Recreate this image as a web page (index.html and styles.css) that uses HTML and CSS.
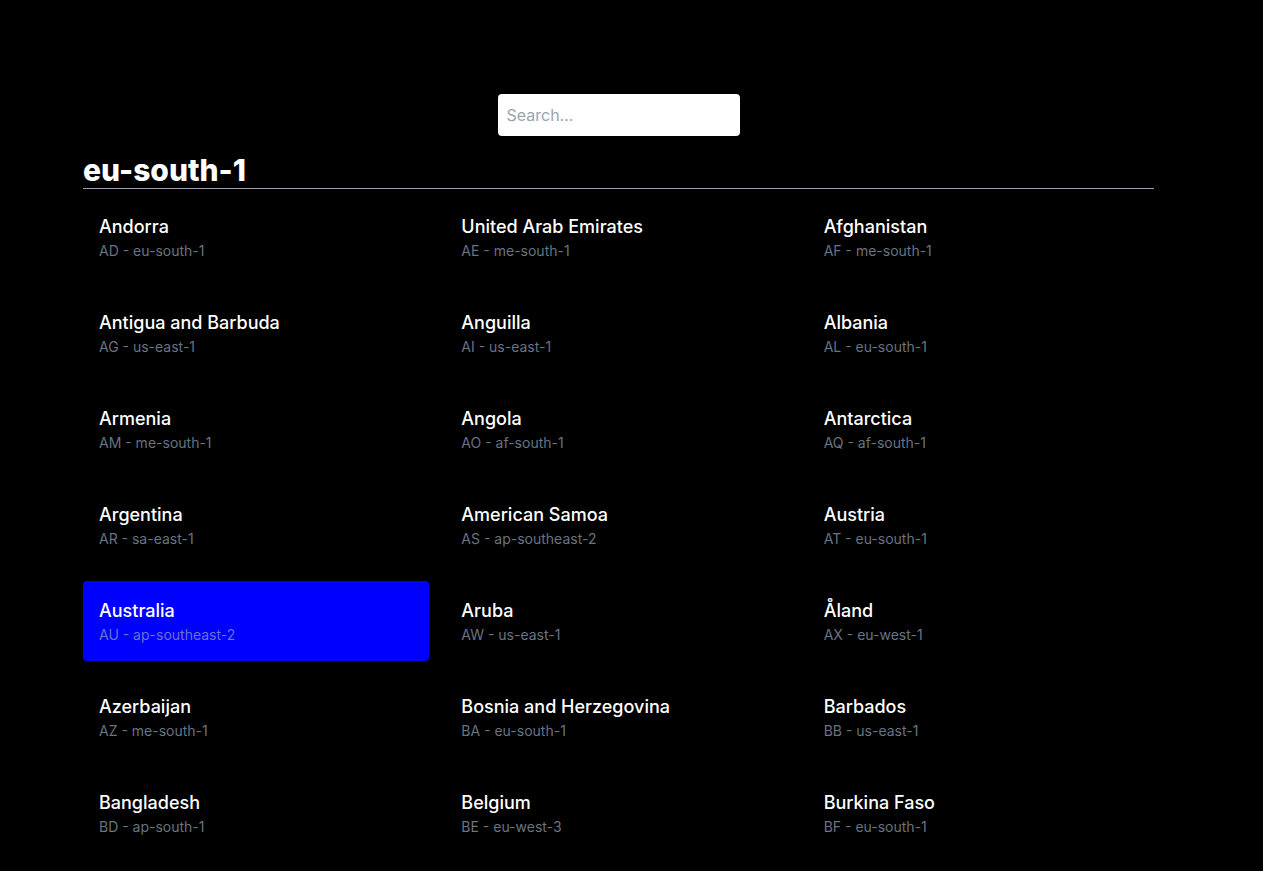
FILE: index.html
```html
<!DOCTYPE html>
<html lang="en">
<head>
<meta charset="utf-8">
<title>Countries</title>
<link rel="stylesheet" href="styles.css">
</head>
<body>
<main class="page">
  <div class="search-row">
    <input class="search" type="text" placeholder="Search...">
  </div>
  <section class="region">
    <h2 class="region-title">eu-south-1</h2>
    <div class="grid">
      <div class="card"><div class="name">Andorra</div><div class="meta">AD - eu-south-1</div></div>
      <div class="card"><div class="name">United Arab Emirates</div><div class="meta">AE - me-south-1</div></div>
      <div class="card"><div class="name">Afghanistan</div><div class="meta">AF - me-south-1</div></div>
      <div class="card"><div class="name">Antigua and Barbuda</div><div class="meta">AG - us-east-1</div></div>
      <div class="card"><div class="name">Anguilla</div><div class="meta">AI - us-east-1</div></div>
      <div class="card"><div class="name">Albania</div><div class="meta">AL - eu-south-1</div></div>
      <div class="card"><div class="name">Armenia</div><div class="meta">AM - me-south-1</div></div>
      <div class="card"><div class="name">Angola</div><div class="meta">AO - af-south-1</div></div>
      <div class="card"><div class="name">Antarctica</div><div class="meta">AQ - af-south-1</div></div>
      <div class="card"><div class="name">Argentina</div><div class="meta">AR - sa-east-1</div></div>
      <div class="card"><div class="name">American Samoa</div><div class="meta">AS - ap-southeast-2</div></div>
      <div class="card"><div class="name">Austria</div><div class="meta">AT - eu-south-1</div></div>
      <div class="card active"><div class="name">Australia</div><div class="meta">AU - ap-southeast-2</div></div>
      <div class="card"><div class="name">Aruba</div><div class="meta">AW - us-east-1</div></div>
      <div class="card"><div class="name">Åland</div><div class="meta">AX - eu-west-1</div></div>
      <div class="card"><div class="name">Azerbaijan</div><div class="meta">AZ - me-south-1</div></div>
      <div class="card"><div class="name">Bosnia and Herzegovina</div><div class="meta">BA - eu-south-1</div></div>
      <div class="card"><div class="name">Barbados</div><div class="meta">BB - us-east-1</div></div>
      <div class="card"><div class="name">Bangladesh</div><div class="meta">BD - ap-south-1</div></div>
      <div class="card"><div class="name">Belgium</div><div class="meta">BE - eu-west-3</div></div>
      <div class="card"><div class="name">Burkina Faso</div><div class="meta">BF - eu-south-1</div></div>
      <div class="card"><div class="name">Bulgaria</div><div class="meta">BG - eu-central-1</div></div>
      <div class="card"><div class="name">Bahrain</div><div class="meta">BH - me-south-1</div></div>
      <div class="card"><div class="name">Burundi</div><div class="meta">BI - af-south-1</div></div>
      <div class="card"><div class="name">Benin</div><div class="meta">BJ - eu-south-1</div></div>
      <div class="card"><div class="name">Saint Barthélemy</div><div class="meta">BL - us-east-1</div></div>
      <div class="card"><div class="name">Bermuda</div><div class="meta">BM - us-east-1</div></div>
      <div class="card"><div class="name">Brunei</div><div class="meta">BN - ap-southeast-1</div></div>
      <div class="card"><div class="name">Bolivia</div><div class="meta">BO - sa-east-1</div></div>
      <div class="card"><div class="name">Bonaire</div><div class="meta">BQ - us-east-1</div></div>
      <div class="card"><div class="name">Brazil</div><div class="meta">BR - sa-east-1</div></div>
      <div class="card"><div class="name">Bahamas</div><div class="meta">BS - us-east-1</div></div>
      <div class="card"><div class="name">Bhutan</div><div class="meta">BT - ap-south-1</div></div>
      <div class="card"><div class="name">Bouvet Island</div><div class="meta">BV - af-south-1</div></div>
      <div class="card"><div class="name">Botswana</div><div class="meta">BW - af-south-1</div></div>
      <div class="card"><div class="name">Belarus</div><div class="meta">BY - eu-central-1</div></div>
      <div class="card"><div class="name">Belize</div><div class="meta">BZ - us-east-1</div></div>
      <div class="card"><div class="name">Canada</div><div class="meta">CA - ca-central-1</div></div>
      <div class="card"><div class="name">Cocos [Keeling] Islands</div><div class="meta">CC - ap-southeast-1</div></div>
      <div class="card"><div class="name">Democratic Republic of the Congo</div><div class="meta">CD - af-south-1</div></div>
      <div class="card"><div class="name">Central African Republic</div><div class="meta">CF - af-south-1</div></div>
      <div class="card"><div class="name">Republic of the Congo</div><div class="meta">CG - af-south-1</div></div>
      <div class="card"><div class="name">Switzerland</div><div class="meta">CH - eu-central-1</div></div>
      <div class="card"><div class="name">Ivory Coast</div><div class="meta">CI - eu-south-1</div></div>
      <div class="card"><div class="name">Cook Islands</div><div class="meta">CK - ap-southeast-2</div></div>
      <div class="card"><div class="name">Chile</div><div class="meta">CL - sa-east-1</div></div>
      <div class="card"><div class="name">Cameroon</div><div class="meta">CM - af-south-1</div></div>
      <div class="card"><div class="name">China</div><div class="meta">CN - ap-east-1</div></div>
      <div class="card"><div class="name">Colombia</div><div class="meta">CO - us-east-1</div></div>
      <div class="card"><div class="name">Costa Rica</div><div class="meta">CR - us-east-1</div></div>
      <div class="card"><div class="name">Cuba</div><div class="meta">CU - us-east-1</div></div>
      <div class="card"><div class="name">Cape Verde</div><div class="meta">CV - eu-south-1</div></div>
      <div class="card"><div class="name">Curacao</div><div class="meta">CW - us-east-1</div></div>
      <div class="card"><div class="name">Christmas Island</div><div class="meta">CX - ap-southeast-1</div></div>
      <div class="card"><div class="name">Cyprus</div><div class="meta">CY - eu-south-1</div></div>
      <div class="card"><div class="name">Czechia</div><div class="meta">CZ - eu-central-1</div></div>
      <div class="card"><div class="name">Germany</div><div class="meta">DE - eu-central-1</div></div>
      <div class="card"><div class="name">Djibouti</div><div class="meta">DJ - me-south-1</div></div>
      <div class="card"><div class="name">Denmark</div><div class="meta">DK - eu-north-1</div></div>
      <div class="card"><div class="name">Dominica</div><div class="meta">DM - us-east-1</div></div>
    </div>
  </section>
</main>
</body>
</html>
```
FILE: styles.css
```css
html, body {
  margin: 0;
  padding: 0;
  background: #000;
  color: #fff;
  font-family: Inter, "Noto Sans", sans-serif;
}

.page {
  width: 1071px;
  margin-left: 83px;
  padding-top: 94px;
  padding-bottom: 40px;
}

.search-row {
  display: flex;
  justify-content: center;
  margin-bottom: 16px;
}

.search {
  box-sizing: border-box;
  width: 242px;
  height: 42px;
  padding: 0 9px;
  border: none;
  border-radius: 4px;
  background: #fff;
  font-family: Inter, sans-serif;
  font-size: 16px;
  color: #111;
  outline: none;
}

.search::placeholder {
  color: #9ca3af;
}

.region-title {
  margin: 0 0 8px 0;
  font-size: 30px;
  line-height: 36px;
  font-weight: 800;
  border-bottom: 1px solid #a1a1b5;
}

.grid {
  display: grid;
  grid-template-columns: repeat(3, 1fr);
  gap: 16px;
}

.card {
  padding: 16px;
  border-radius: 4px;
}

.card.active {
  background: #0000ff;
}

.name {
  font-size: 18px;
  line-height: 28px;
  font-weight: 500;
  color: #fff;
}

.meta {
  font-size: 14px;
  line-height: 20px;
  color: rgba(148, 163, 184, 0.72);
}
```
